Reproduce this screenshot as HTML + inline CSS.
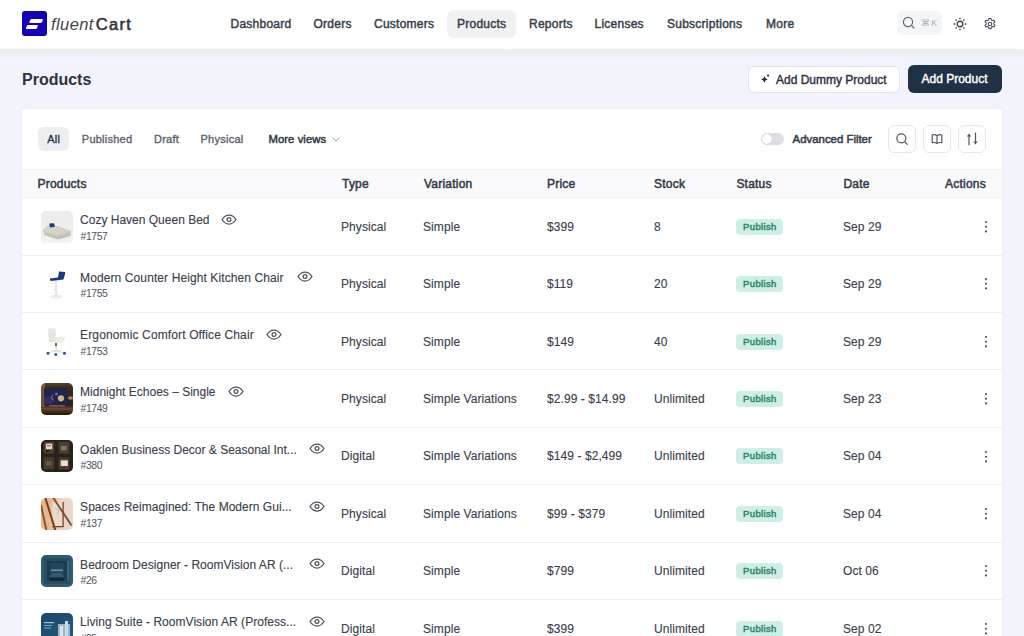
<!DOCTYPE html>
<html><head><meta charset="utf-8"><style>
*{box-sizing:border-box;margin:0;padding:0}
html,body{width:1024px;height:636px;overflow:hidden}
body{background:#f3f3fc;font-family:"Liberation Sans",sans-serif;color:#2d3440;position:relative}
.hdr{position:absolute;left:0;top:0;width:1024px;height:49px;background:#fff}
.hsh{position:absolute;left:0;top:49px;width:1024px;height:13px;background:linear-gradient(#ebecf0,#eff0f5 45%,#f3f3fc)}
.abs{position:absolute;white-space:nowrap}
.nav{position:absolute;top:17px;font-size:12px;line-height:14px;letter-spacing:0.25px;color:#383e4a;white-space:nowrap;-webkit-text-stroke:0.45px #383e4a}
.navact{position:absolute;left:446.5px;top:10px;width:69px;height:28px;border-radius:7px;background:#f0f1f3}
.title{position:absolute;left:22px;top:69.7px;font-size:16px;font-weight:700;line-height:19px;color:#2d3440}
.btn{position:absolute;top:65.5px;height:27px;border-radius:6px;font-size:12px;line-height:28.5px;white-space:nowrap;-webkit-text-stroke:0.4px currentColor}
.card{position:absolute;left:22.3px;top:109.2px;width:979.5px;height:600px;background:#fff;border-radius:4px;box-shadow:0 0 3px rgba(30,30,60,.05)}
.tab{position:absolute;top:133px;font-size:11px;line-height:13px;letter-spacing:0.25px;color:#5a606c;white-space:nowrap;-webkit-text-stroke:0.35px currentColor}
.thead{position:absolute;left:22px;top:168.9px;width:980px;height:29.2px;background:#fafafc;border-top:1px solid #eff0f3;border-bottom:1px solid #eff0f3}
.th_{position:absolute;top:177px;font-size:12px;line-height:14px;letter-spacing:0.22px;color:#343a46;white-space:nowrap;-webkit-text-stroke:0.5px #343a46}
.row{position:absolute;left:22px;width:980px;height:57.4px}
.rl{position:absolute;left:22px;width:980px;height:1px;background:#eff0f3}
.row .thw{position:absolute;left:19px;top:13px;width:32px;height:32px}
.th{width:32px;height:32px;border-radius:5px;overflow:hidden}
.th svg{display:block}
.nm{position:absolute;left:58.1px;top:15.5px;font-size:12px;line-height:14px;color:#3a404c;white-space:nowrap;-webkit-text-stroke:0.12px #3a404c}
.pid{position:absolute;left:58.5px;top:33px;font-size:10.4px;line-height:12px;color:#4d535e;letter-spacing:-0.4px;white-space:nowrap}
.eye{position:absolute;top:16px;width:16px;height:11px;margin-left:-23px}
.eye svg{display:block}
.c{position:absolute;top:22px;font-size:12px;line-height:14px;color:#3a404c;white-space:nowrap;margin-left:-22px;letter-spacing:0.08px;-webkit-text-stroke:0.12px #3a404c}
.badge{position:absolute;left:714.4px;top:21px;width:47px;height:16px;border-radius:4px;background:#cfeee6;color:#2a8569;font-size:9.5px;letter-spacing:0.35px;line-height:16px;text-align:center;-webkit-text-stroke:0.45px #2a8569}
.dots{position:absolute;left:961.8px;top:22.3px;width:4px;height:14px}
.dots svg{display:block}
</style></head><body>
<div class="hdr"></div><div class="hsh"></div>
<div class="abs" style="left:22px;top:11px;width:25px;height:25px;border-radius:3px;background:#1400b6">
<svg width="25" height="25" viewBox="0 0 25 25" style="display:block"><path d="M9.8 8 H20 Q21.2 8 20.8 9 L20 11 Q19.6 12 18.4 12 H8.2 Q7 12 7.4 11 L8.2 9 Q8.6 8 9.8 8Z" fill="#fff"/><path d="M6.4 14 H15 Q16.2 14 15.8 15 L15 17 Q14.6 18 13.4 18 H4.8 Q3.6 18 4 17 L4.8 15 Q5.2 14 6.4 14Z" fill="#fff"/></svg>
</div>
<div class="abs" style="left:51px;top:14.9px;font-size:16.5px;line-height:19px;color:#3a3a3a"><span style="letter-spacing:0.4px;color:#454545;font-style:italic">fluent</span><span style="letter-spacing:1.3px;margin-left:2px;color:#333;-webkit-text-stroke:0.55px #333">Cart</span></div>
<div class="navact"></div>
<div class="nav" style="left:230.5px">Dashboard</div>
<div class="nav" style="left:313.5px">Orders</div>
<div class="nav" style="left:374px">Customers</div>
<div class="nav" style="left:457px">Products</div>
<div class="nav" style="left:529px">Reports</div>
<div class="nav" style="left:594.5px">Licenses</div>
<div class="nav" style="left:667px">Subscriptions</div>
<div class="nav" style="left:766px">More</div>
<div class="abs" style="left:897px;top:11px;width:45px;height:24px;border-radius:6px;background:#f4f5f7"></div>
<svg class="abs" style="left:902px;top:16px" width="14" height="14" viewBox="0 0 14 14"><circle cx="6" cy="6" r="4.6" fill="none" stroke="#656a73" stroke-width="1.2"/><path d="M9.4 9.4 L12 12" stroke="#656a73" stroke-width="1.2" stroke-linecap="round"/></svg>
<div class="abs" style="left:921px;top:17.5px;font-size:9px;line-height:11px;color:#a8acb3;letter-spacing:1.2px">⌘K</div>
<svg class="abs" style="left:953px;top:16.5px" width="14" height="14" viewBox="0 0 14 14"><circle cx="7" cy="7" r="2.75" fill="none" stroke="#3a404c" stroke-width="1.3"/><g stroke="#3a404c" stroke-width="1.3" stroke-linecap="round"><path d="M7 1.2v.6M7 12.2v.6M1.2 7h.6M12.2 7h.6M2.9 2.9l.4.4M10.7 10.7l.4.4M2.9 11.1l.4-.4M10.7 3.3l.4-.4"/></g></svg>
<svg class="abs" style="left:983px;top:16.5px" width="14" height="14" viewBox="0 0 24 24"><path d="M10.3 2.5h3.4l.6 2.6 1.9 1.1 2.6-.8 1.7 2.9-2 1.9v2.2l2 1.9-1.7 2.9-2.6-.8-1.9 1.1-.6 2.6h-3.4l-.6-2.6-1.9-1.1-2.6.8-1.7-2.9 2-1.9v-2.2l-2-1.9 1.7-2.9 2.6.8 1.9-1.1z" fill="none" stroke="#454b56" stroke-width="1.8" stroke-linejoin="round"/><circle cx="12" cy="12" r="3" fill="none" stroke="#454b56" stroke-width="1.8"/></svg>

<div class="title">Products</div>
<div class="btn" style="left:748px;width:152px;line-height:26.5px;background:#fff;border:1px solid #e2e4e9;color:#2d3440;padding-left:27px">Add Dummy Product</div>
<svg class="abs" style="left:760px;top:73px" width="10" height="10" viewBox="0 0 10 10"><path d="M4.4 3.1 Q4.9 5.9 7.7 6.4 Q4.9 6.9 4.4 9.7 Q3.9 6.9 1.1 6.4 Q3.9 5.9 4.4 3.1Z" fill="#2a303b"/><circle cx="8.1" cy="2.6" r="1.15" fill="#2a303b"/></svg>
<div class="btn" style="left:907.5px;width:94px;top:65px;height:28px;background:#1f3145;color:#fff;text-align:center">Add Product</div>

<div class="card"></div>
<div class="abs" style="left:38px;top:126.5px;width:31px;height:24.5px;border-radius:6px;background:#eceef2"></div>
<div class="tab" style="left:47.2px;color:#2d3440">All</div>
<div class="tab" style="left:81.8px">Published</div>
<div class="tab" style="left:154px">Draft</div>
<div class="tab" style="left:200.5px">Physical</div>
<div class="tab" style="left:268.5px;top:132.8px;letter-spacing:0.05px;color:#2d3440;font-size:11.3px;-webkit-text-stroke:0.45px #2d3440">More views</div>
<svg class="abs" style="left:332px;top:137px" width="8" height="5" viewBox="0 0 8 5"><path d="M.5 .8 L4 4 L7.5 .8" fill="none" stroke="#9ca0a8" stroke-width="1"/></svg>

<div class="abs" style="left:761px;top:133px;width:23px;height:12px;border-radius:6px;background:#dcdee4"></div>
<div class="abs" style="left:762px;top:134px;width:10px;height:10px;border-radius:5px;background:#fff;box-shadow:0 0 1px rgba(0,0,0,.2)"></div>
<div class="tab" style="left:792.6px;top:132.5px;letter-spacing:0;color:#343a46;font-size:11.4px;-webkit-text-stroke:0.5px #343a46">Advanced Filter</div>
<div class="abs" style="left:888px;top:124.6px;width:28px;height:28px;border:1px solid #e6e7eb;border-radius:6px"></div>
<div class="abs" style="left:923px;top:124.6px;width:28px;height:28px;border:1px solid #e6e7eb;border-radius:6px"></div>
<div class="abs" style="left:957.5px;top:124.6px;width:28px;height:28px;border:1px solid #e6e7eb;border-radius:6px"></div>
<svg class="abs" style="left:895px;top:131.6px" width="14" height="14" viewBox="0 0 14 14"><circle cx="6.3" cy="6.3" r="4.5" fill="none" stroke="#50565f" stroke-width="1.2"/><path d="M9.6 9.6 L12.3 12.3" stroke="#50565f" stroke-width="1.2" stroke-linecap="round"/></svg>
<svg class="abs" style="left:930px;top:131.6px" width="14" height="14" viewBox="0 0 14 14"><path d="M7 3.8 C5.6 2.6 3.8 2.4 2.2 3 V10.8 C3.8 10.3 5.6 10.6 7 11.6 C8.4 10.6 10.2 10.3 11.8 10.8 V3 C10.2 2.4 8.4 2.6 7 3.8Z M7 3.8 V11.6" fill="none" stroke="#50565f" stroke-width="1.15" stroke-linejoin="round"/></svg>
<svg class="abs" style="left:964.5px;top:131.6px" width="14" height="14" viewBox="0 0 14 14"><g stroke="#50565f" stroke-width="1.2" stroke-linecap="round"><path d="M4 4 V12.8"/><path d="M10.5 1.2 V10"/></g><g fill="#50565f"><path d="M1.9 4.6 L4 1.4 L6.1 4.6Z"/><path d="M8.4 9.4 L10.5 12.6 L12.6 9.4Z"/></g></svg>

<div class="thead"></div>
<div class="th_" style="left:37.5px">Products</div>
<div class="th_" style="left:342px">Type</div>
<div class="th_" style="left:424px">Variation</div>
<div class="th_" style="left:547px">Price</div>
<div class="th_" style="left:654px">Stock</div>
<div class="th_" style="left:736.4px">Status</div>
<div class="th_" style="left:843.4px">Date</div>
<div class="th_" style="left:945px">Actions</div>
<div class="rl" style="top:254.50px"></div><div class="row" style="top:197.70px">
<div class="thw"><div class="th" style="background:linear-gradient(#ececec,#efefef 70%,#f4f4f4)"><svg width="32" height="32" viewBox="0 0 32 32"><path d="M2 19 L7 14.5 L16 15 L30 20 L29.5 25 L17 28.5 L3.5 24Z" fill="#c4bfb4"/><path d="M2.5 18.5 L7.5 14.5 L16.5 15.2 L29.5 20 L17 24.5 L4 21Z" fill="#d6d2c8"/><path d="M3 21 L17 24.5 L29.5 20 L29.5 22 L17 26 L3.5 23Z" fill="#cdc8be"/><path d="M8.3 12.6 L13 12.2 L14 15.8 L9 16.4Z" fill="#1c3b82"/></svg></div></div>
<div class="nm" style="letter-spacing:0px">Cozy Haven Queen Bed</div><div class="pid">#1757</div>
<div class="eye" style="left:221.7px"><svg width="16" height="11" viewBox="0 0 16 11"><path d="M1 5.5C2.9 2.4 5.2 1 8 1S13.1 2.4 15 5.5C13.1 8.6 10.8 10 8 10S2.9 8.6 1 5.5Z" fill="none" stroke="#4d535d" stroke-width="1.25"/><circle cx="8" cy="5.5" r="1.9" fill="none" stroke="#4d535d" stroke-width="1.25"/></svg></div>
<div class="c" style="left:341px">Physical</div>
<div class="c" style="left:423px">Simple</div>
<div class="c" style="left:547px">$399</div>
<div class="c" style="left:654px">8</div>
<div class="badge">Publish</div>
<div class="c" style="left:843px">Sep 29</div>
<div class="dots"><svg width="4" height="14" viewBox="0 0 4 14"><circle cx="2" cy="2" r="1.05" fill="#4a505c"/><circle cx="2" cy="6.7" r="1.05" fill="#4a505c"/><circle cx="2" cy="11.4" r="1.05" fill="#4a505c"/></svg></div>
</div><div class="rl" style="top:311.90px"></div><div class="row" style="top:255.10px">
<div class="thw"><div class="th" style="background:#fff"><svg width="32" height="32" viewBox="0 0 32 32"><ellipse cx="15.3" cy="28.3" rx="6" ry="2" fill="#ececec"/><rect x="14.2" y="12" width="1.6" height="16" fill="#e2e2e2"/><rect x="12" y="21" width="4" height="1.4" fill="#e6e6e6"/><path d="M18 3.5 L24 4 Q24.5 4.5 24 6 L22.5 11.5 L10 13 Q8.5 12.5 9 10.5 L17 9.5Z" fill="#1d3680"/></svg></div></div>
<div class="nm" style="letter-spacing:0.1px">Modern Counter Height Kitchen Chair</div><div class="pid">#1755</div>
<div class="eye" style="left:297.5px"><svg width="16" height="11" viewBox="0 0 16 11"><path d="M1 5.5C2.9 2.4 5.2 1 8 1S13.1 2.4 15 5.5C13.1 8.6 10.8 10 8 10S2.9 8.6 1 5.5Z" fill="none" stroke="#4d535d" stroke-width="1.25"/><circle cx="8" cy="5.5" r="1.9" fill="none" stroke="#4d535d" stroke-width="1.25"/></svg></div>
<div class="c" style="left:341px">Physical</div>
<div class="c" style="left:423px">Simple</div>
<div class="c" style="left:547px">$119</div>
<div class="c" style="left:654px">20</div>
<div class="badge">Publish</div>
<div class="c" style="left:843px">Sep 29</div>
<div class="dots"><svg width="4" height="14" viewBox="0 0 4 14"><circle cx="2" cy="2" r="1.05" fill="#4a505c"/><circle cx="2" cy="6.7" r="1.05" fill="#4a505c"/><circle cx="2" cy="11.4" r="1.05" fill="#4a505c"/></svg></div>
</div><div class="rl" style="top:369.30px"></div><div class="row" style="top:312.50px">
<div class="thw"><div class="th" style="background:#fff"><svg width="32" height="32" viewBox="0 0 32 32"><path d="M7 2.5 L14.5 2.5 L15 16 L8 16.5Z" fill="#e6e5df"/><path d="M13 11 L23 10.5 Q24.5 11 24 13 L22.5 16.5 L14 17Z" fill="#ecebe7"/><rect x="14" y="17" width="2" height="3" fill="#6a6a6a"/><rect x="14.6" y="20" width="1" height="5.5" fill="#cfcfcf"/><path d="M7 27 L15 25 L24 27 M11 24.5 L15 25 L20 24.5" stroke="#dcdcdc" stroke-width="1" fill="none"/><circle cx="7" cy="27.3" r="1.5" fill="#2a5a9a"/><circle cx="14.8" cy="28.5" r="1.5" fill="#2a5a9a"/><circle cx="23.5" cy="27.3" r="1.5" fill="#2a5a9a"/></svg></div></div>
<div class="nm" style="letter-spacing:0.13px">Ergonomic Comfort Office Chair</div><div class="pid">#1753</div>
<div class="eye" style="left:266.7px"><svg width="16" height="11" viewBox="0 0 16 11"><path d="M1 5.5C2.9 2.4 5.2 1 8 1S13.1 2.4 15 5.5C13.1 8.6 10.8 10 8 10S2.9 8.6 1 5.5Z" fill="none" stroke="#4d535d" stroke-width="1.25"/><circle cx="8" cy="5.5" r="1.9" fill="none" stroke="#4d535d" stroke-width="1.25"/></svg></div>
<div class="c" style="left:341px">Physical</div>
<div class="c" style="left:423px">Simple</div>
<div class="c" style="left:547px">$149</div>
<div class="c" style="left:654px">40</div>
<div class="badge">Publish</div>
<div class="c" style="left:843px">Sep 29</div>
<div class="dots"><svg width="4" height="14" viewBox="0 0 4 14"><circle cx="2" cy="2" r="1.05" fill="#4a505c"/><circle cx="2" cy="6.7" r="1.05" fill="#4a505c"/><circle cx="2" cy="11.4" r="1.05" fill="#4a505c"/></svg></div>
</div><div class="rl" style="top:426.70px"></div><div class="row" style="top:369.90px">
<div class="thw"><div class="th" style="background:linear-gradient(180deg,#5a4028 0%,#3a2a1e 15%,#2a2020 70%,#6a4a30 80%,#3a2414 92%,#24160e 100%)"><svg width="32" height="32" viewBox="0 0 32 32"><rect x="0" y="0" width="4" height="24" fill="#a07a48" opacity=".55"/><rect x="3" y="5.5" width="23" height="16" fill="#22234e"/><rect x="3" y="14" width="9" height="7.5" fill="#40306a" opacity=".7"/><circle cx="20" cy="15.3" r="3.1" fill="#cdb585"/><circle cx="15.5" cy="11" r="1.6" fill="#9a9ac0" opacity=".6"/><path d="M12 11.5 A3.5 3.5 0 0 0 13 17.5" stroke="#8a8ab0" stroke-width=".8" fill="none"/><ellipse cx="29.5" cy="15" rx="2.5" ry="1.8" fill="#e8c080" opacity=".65"/><rect x="8" y="22" width="16" height="1.6" fill="#9a8068" opacity=".6"/></svg></div></div>
<div class="nm" style="letter-spacing:0px">Midnight Echoes – Single</div><div class="pid">#1749</div>
<div class="eye" style="left:229.3px"><svg width="16" height="11" viewBox="0 0 16 11"><path d="M1 5.5C2.9 2.4 5.2 1 8 1S13.1 2.4 15 5.5C13.1 8.6 10.8 10 8 10S2.9 8.6 1 5.5Z" fill="none" stroke="#4d535d" stroke-width="1.25"/><circle cx="8" cy="5.5" r="1.9" fill="none" stroke="#4d535d" stroke-width="1.25"/></svg></div>
<div class="c" style="left:341px">Physical</div>
<div class="c" style="left:423px">Simple Variations</div>
<div class="c" style="left:547px">$2.99 - $14.99</div>
<div class="c" style="left:654px">Unlimited</div>
<div class="badge">Publish</div>
<div class="c" style="left:843px">Sep 23</div>
<div class="dots"><svg width="4" height="14" viewBox="0 0 4 14"><circle cx="2" cy="2" r="1.05" fill="#4a505c"/><circle cx="2" cy="6.7" r="1.05" fill="#4a505c"/><circle cx="2" cy="11.4" r="1.05" fill="#4a505c"/></svg></div>
</div><div class="rl" style="top:484.10px"></div><div class="row" style="top:427.30px">
<div class="thw"><div class="th" style="background:#24221f"><svg width="32" height="32" viewBox="0 0 32 32"><rect x="2.7" y="1.8" width="10.5" height="12" fill="#4a3c26"/><rect x="17.6" y="1.8" width="10.8" height="12" fill="#4a3c26"/><rect x="2.7" y="17.3" width="10.5" height="12" fill="#4a3c26"/><rect x="17.6" y="17.3" width="10.8" height="12" fill="#4a3c26"/><rect x="4.8" y="3.6" width="6.5" height="5.6" fill="#e6d8cc"/><rect x="6" y="5" width="4" height="1.5" fill="#c07070"/><rect x="5" y="10.5" width="3" height="1.5" fill="#2a1a10"/><rect x="20" y="5.7" width="5.7" height="4.7" fill="#707a64"/><rect x="4.8" y="21.2" width="5.6" height="4.2" fill="#5c5c54"/><rect x="19.7" y="20.3" width="7.2" height="5.7" fill="#e6dfd2"/></svg></div></div>
<div class="nm" style="letter-spacing:0px">Oaklen Business Decor &amp; Seasonal Int...</div><div class="pid">#380</div>
<div class="eye" style="left:309.7px"><svg width="16" height="11" viewBox="0 0 16 11"><path d="M1 5.5C2.9 2.4 5.2 1 8 1S13.1 2.4 15 5.5C13.1 8.6 10.8 10 8 10S2.9 8.6 1 5.5Z" fill="none" stroke="#4d535d" stroke-width="1.25"/><circle cx="8" cy="5.5" r="1.9" fill="none" stroke="#4d535d" stroke-width="1.25"/></svg></div>
<div class="c" style="left:341px">Digital</div>
<div class="c" style="left:423px">Simple Variations</div>
<div class="c" style="left:547px">$149 - $2,499</div>
<div class="c" style="left:654px">Unlimited</div>
<div class="badge">Publish</div>
<div class="c" style="left:843px">Sep 04</div>
<div class="dots"><svg width="4" height="14" viewBox="0 0 4 14"><circle cx="2" cy="2" r="1.05" fill="#4a505c"/><circle cx="2" cy="6.7" r="1.05" fill="#4a505c"/><circle cx="2" cy="11.4" r="1.05" fill="#4a505c"/></svg></div>
</div><div class="rl" style="top:541.50px"></div><div class="row" style="top:484.70px">
<div class="thw"><div class="th" style="background:linear-gradient(90deg,#e8b48a 0%,#e9bc98 40%,#ead2c2 60%,#ebd8ca 100%)"><svg width="32" height="32" viewBox="0 0 32 32"><rect x="11.3" y="4.1" width="10.8" height="24.5" fill="#e9ddca"/><path d="M22.1 4.1 V28.6 H11.3" stroke="#6a4a30" stroke-width="1.3" fill="none"/><path d="M4.2 -0.7 L14.3 32.1" stroke="#7a3e1c" stroke-width="2"/><path d="M11.9 -0.7 L30.5 27.4" stroke="#7a4a2a" stroke-width="1.8"/><path d="M0 7 L5.4 32" stroke="#8a4a20" stroke-width="1.8"/><path d="M14 10 L18 12 L16 16" stroke="#b0a090" stroke-width=".6" fill="none"/></svg></div></div>
<div class="nm" style="letter-spacing:0.03px">Spaces Reimagined: The Modern Gui...</div><div class="pid">#137</div>
<div class="eye" style="left:309.7px"><svg width="16" height="11" viewBox="0 0 16 11"><path d="M1 5.5C2.9 2.4 5.2 1 8 1S13.1 2.4 15 5.5C13.1 8.6 10.8 10 8 10S2.9 8.6 1 5.5Z" fill="none" stroke="#4d535d" stroke-width="1.25"/><circle cx="8" cy="5.5" r="1.9" fill="none" stroke="#4d535d" stroke-width="1.25"/></svg></div>
<div class="c" style="left:341px">Physical</div>
<div class="c" style="left:423px">Simple Variations</div>
<div class="c" style="left:547px">$99 - $379</div>
<div class="c" style="left:654px">Unlimited</div>
<div class="badge">Publish</div>
<div class="c" style="left:843px">Sep 04</div>
<div class="dots"><svg width="4" height="14" viewBox="0 0 4 14"><circle cx="2" cy="2" r="1.05" fill="#4a505c"/><circle cx="2" cy="6.7" r="1.05" fill="#4a505c"/><circle cx="2" cy="11.4" r="1.05" fill="#4a505c"/></svg></div>
</div><div class="rl" style="top:598.90px"></div><div class="row" style="top:542.10px">
<div class="thw"><div class="th" style="background:#2e5a72"><svg width="32" height="32" viewBox="0 0 32 32"><rect x="3" y="3" width="26" height="26" fill="#284d63"/><rect x="6" y="6" width="20" height="20" fill="#1c3b50"/><rect x="9" y="8" width="14" height="14" fill="#24465a"/><rect x="10" y="14.5" width="12" height="1.6" fill="#7090a0"/><path d="M8 22 L12 18 H20 L24 22Z" fill="#345a70"/><rect x="9" y="23" width="14" height="3" fill="#12273a"/><rect x="26" y="6" width="2" height="20" fill="#4a7890" opacity=".6"/></svg></div></div>
<div class="nm" style="letter-spacing:0.03px">Bedroom Designer - RoomVision AR (...</div><div class="pid">#26</div>
<div class="eye" style="left:309.7px"><svg width="16" height="11" viewBox="0 0 16 11"><path d="M1 5.5C2.9 2.4 5.2 1 8 1S13.1 2.4 15 5.5C13.1 8.6 10.8 10 8 10S2.9 8.6 1 5.5Z" fill="none" stroke="#4d535d" stroke-width="1.25"/><circle cx="8" cy="5.5" r="1.9" fill="none" stroke="#4d535d" stroke-width="1.25"/></svg></div>
<div class="c" style="left:341px">Digital</div>
<div class="c" style="left:423px">Simple</div>
<div class="c" style="left:547px">$799</div>
<div class="c" style="left:654px">Unlimited</div>
<div class="badge">Publish</div>
<div class="c" style="left:843px">Oct 06</div>
<div class="dots"><svg width="4" height="14" viewBox="0 0 4 14"><circle cx="2" cy="2" r="1.05" fill="#4a505c"/><circle cx="2" cy="6.7" r="1.05" fill="#4a505c"/><circle cx="2" cy="11.4" r="1.05" fill="#4a505c"/></svg></div>
</div><div class="rl" style="top:656.30px"></div><div class="row" style="top:599.50px">
<div class="thw"><div class="th" style="background:linear-gradient(135deg,#1a4668,#245c80)"><svg width="32" height="32" viewBox="0 0 32 32"><rect x="3" y="9" width="10" height="1.2" fill="#a8c4d8"/><rect x="3" y="12" width="8" height="1" fill="#88a8c0"/><rect x="3" y="14.5" width="7" height="1" fill="#88a8c0"/><rect x="17" y="11" width="12" height="18" fill="#9ab6c8"/><rect x="19" y="13" width="3" height="14" fill="#d8e6ee"/><rect x="24" y="8" width="3" height="20" fill="#c8dae6"/></svg></div></div>
<div class="nm" style="letter-spacing:0.04px">Living Suite - RoomVision AR (Profess...</div><div class="pid">#25</div>
<div class="eye" style="left:309.7px"><svg width="16" height="11" viewBox="0 0 16 11"><path d="M1 5.5C2.9 2.4 5.2 1 8 1S13.1 2.4 15 5.5C13.1 8.6 10.8 10 8 10S2.9 8.6 1 5.5Z" fill="none" stroke="#4d535d" stroke-width="1.25"/><circle cx="8" cy="5.5" r="1.9" fill="none" stroke="#4d535d" stroke-width="1.25"/></svg></div>
<div class="c" style="left:341px">Digital</div>
<div class="c" style="left:423px">Simple</div>
<div class="c" style="left:547px">$399</div>
<div class="c" style="left:654px">Unlimited</div>
<div class="badge">Publish</div>
<div class="c" style="left:843px">Sep 02</div>
<div class="dots"><svg width="4" height="14" viewBox="0 0 4 14"><circle cx="2" cy="2" r="1.05" fill="#4a505c"/><circle cx="2" cy="6.7" r="1.05" fill="#4a505c"/><circle cx="2" cy="11.4" r="1.05" fill="#4a505c"/></svg></div>
</div>
</body></html>
